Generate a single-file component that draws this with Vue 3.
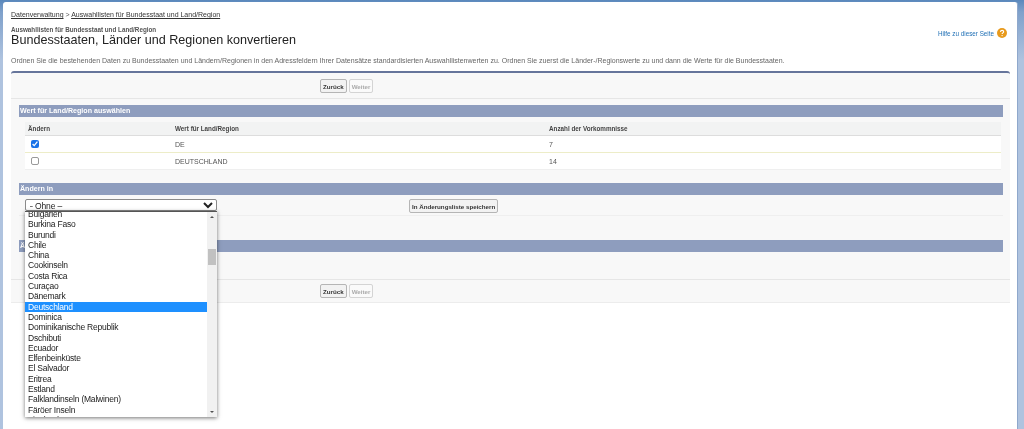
<script setup>
const topButtons = [
  { label: 'Zurück', disabled: false },
  { label: 'Weiter', disabled: true }
];

const rows = [
  { value: 'DE', count: 7, checked: true },
  { value: 'DEUTSCHLAND', count: 14, checked: false }
];

const countries = [
  'Bulgarien', 'Burkina Faso', 'Burundi', 'Chile', 'China', 'Cookinseln', 'Costa Rica',
  'Curaçao', 'Dänemark', 'Deutschland', 'Dominica', 'Dominikanische Republik', 'Dschibuti',
  'Ecuador', 'Elfenbeinküste', 'El Salvador', 'Eritrea', 'Estland', 'Falklandinseln (Malwinen)',
  'Färöer Inseln', 'Finnland'
];
</script>

<template>
  <div class="desktop">
    <main class="page">
      <nav class="crumbs">
        <a>Datenverwaltung</a> &gt; <a>Auswahllisten für Bundesstaat und Land/Region</a>
      </nav>

      <header class="head">
        <div>
          <div class="eyebrow">Auswahllisten für Bundesstaat und Land/Region</div>
          <h1>Bundesstaaten, Länder und Regionen konvertieren</h1>
        </div>
        <a class="help">
          Hilfe zu dieser Seite
          <svg width="10" height="10" viewBox="0 0 10 10">
            <circle cx="5" cy="5" r="5" fill="#e89a1c" />
            <path d="M3.4 3.9C3.5 2.9 4.2 2.4 5.1 2.4c1 0 1.6.6 1.6 1.3 0 1.2-1.6 1.2-1.6 2.4" fill="none" stroke="#fff" stroke-width="1.1" />
            <circle cx="5.1" cy="7.6" r=".7" fill="#fff" />
          </svg>
        </a>
      </header>

      <p class="intro">
        Ordnen Sie die bestehenden Daten zu Bundesstaaten und Ländern/Regionen in den Adressfeldern Ihrer Datensätze standardisierten Auswahllistenwerten zu. Ordnen Sie zuerst die Länder-/Regionswerte zu und dann die Werte für die Bundesstaaten.
      </p>

      <section class="panel">
        <div class="button-row top">
          <button v-for="b in topButtons" :key="b.label" class="btn" :class="{ off: b.disabled }">{{ b.label }}</button>
        </div>

        <div class="body">
          <h2 class="bar">Wert für Land/Region auswählen</h2>
          <table class="values">
            <thead>
              <tr>
                <th class="c1">Ändern</th>
                <th class="c2">Wert für Land/Region</th>
                <th>Anzahl der Vorkommnisse</th>
              </tr>
            </thead>
            <tbody>
              <tr v-for="row in rows" :key="row.value">
                <td class="c1"><input type="checkbox" :checked="row.checked" /></td>
                <td class="c2">{{ row.value }}</td>
                <td>{{ row.count }}</td>
              </tr>
            </tbody>
          </table>

          <h2 class="bar second">Ändern in</h2>
          <div class="change-row">
            <div class="picker">
              <select class="select">
                <option>– Ohne –</option>
              </select>
              <div class="dropdown">
                <ul class="options">
                  <li v-for="c in countries" :key="c" :class="{ active: c === 'Deutschland' }">{{ c }}</li>
                </ul>
                <div class="scrollbar">
                  <span class="arrow up"></span>
                  <span class="thumb"></span>
                  <span class="arrow down"></span>
                </div>
              </div>
            </div>
            <button class="btn">In Änderungsliste speichern</button>
          </div>

          <h2 class="bar third">Änderungsliste</h2>
        </div>

        <div class="button-row bottom">
          <button v-for="b in topButtons" :key="b.label" class="btn" :class="{ off: b.disabled }">{{ b.label }}</button>
        </div>
      </section>
    </main>
  </div>
</template>

<style>
html, body {
  margin: 0;
  overflow: hidden;
}
</style>

<style scoped>
.desktop {
  height: 429px;
  box-sizing: border-box;
  padding: 2px 6px 0 3px;
  overflow: hidden;
  background: linear-gradient(#5a88bc 0, #7fa1cb 12px, #afc3df 60px);
  font-family: "Liberation Sans", Arial, sans-serif;
  color: #333;
}

.page {
  height: 100%;
  box-sizing: border-box;
  padding: 8px 7px 0 8px;
  background: #fff;
  border-radius: 3px 3px 0 0;
  border-right: 1px solid #8fa8cc;
  filter: blur(0.35px);
}

.crumbs {
  font-size: 7px;
  line-height: 9px;
  color: #555;
}

.crumbs a {
  color: #333;
  text-decoration: underline;
}

.head {
  display: flex;
  justify-content: space-between;
  align-items: flex-start;
  margin-top: 8px;
}

.eyebrow {
  font-size: 6.3px;
  line-height: 5px;
  font-weight: bold;
  color: #555;
}

h1 {
  margin: 0;
  font-size: 12.6px;
  line-height: 16px;
  font-weight: normal;
  color: #222;
}

.help {
  display: flex;
  align-items: center;
  gap: 3px;
  margin: 1px 3px 0 0;
  font-size: 6.3px;
  color: #1f6fb5;
}

.intro {
  margin: 8px 0 0;
  font-size: 7.01px;
  line-height: 9px;
  color: #666;
  white-space: nowrap;
}

.panel {
  margin-top: 6px;
  height: 232px;
  display: flex;
  flex-direction: column;
  box-sizing: border-box;
  background: #f8f8f8;
  border-top: 2px solid #66759b;
  border-radius: 3px 3px 0 0;
  border-bottom: 1px solid #ececec;
}

.button-row {
  display: flex;
  gap: 2px;
  padding-left: 309px;
}

.button-row.top {
  height: 26px;
  padding-top: 6px;
  box-sizing: border-box;
  border-bottom: 1px solid #e6e6e6;
}

.button-row.bottom {
  margin-top: auto;
  height: 23px;
  padding-top: 4px;
  box-sizing: border-box;
  border-top: 1px solid #e6e6e6;
}

.btn {
  height: 14px;
  padding: 0 2px;
  border: 1px solid #b5b5b5;
  border-radius: 2px;
  background: #f2f2f2;
  font-family: inherit;
  font-size: 6.2px;
  font-weight: bold;
  color: #333;
}

.btn.off {
  border-color: #d4d4d4;
  background: #fafafa;
  color: #aaa;
}

.body {
  padding: 6px 7px 0 8px;
}

.bar {
  margin: 0;
  height: 12px;
  padding-left: 1px;
  background: #8e9dbe;
  font-size: 7.1px;
  line-height: 12px;
  font-weight: bold;
  color: #fff;
}

.bar.second {
  margin-top: 13px;
}

.bar.third {
  margin-top: 24px;
}

.values {
  margin: 5px 2px 0 6px;
  width: 976px;
  border-collapse: collapse;
  background: #fff;
  font-size: 7px;
  color: #555;
}

.values th {
  height: 13px;
  padding: 0 0 0 3px;
  background: #f2f3f3;
  border-bottom: 1px solid #ddd;
  text-align: left;
  font-size: 6.3px;
  font-weight: bold;
  color: #444;
}

.values td {
  height: 16px;
  padding: 0 0 0 3px;
  border-bottom: 1px solid #ededc8;
}

.values tr:last-child td {
  border-bottom: 1px solid #efefef;
}

.values .c1 {
  width: 144px;
}

.values .c2 {
  width: 371px;
}

.values input {
  display: block;
  box-sizing: border-box;
  width: 8px;
  height: 8px;
  margin: 0 0 0 3px;
  accent-color: #1a73e8;
}

.values input:not(:checked) {
  appearance: none;
  border: 1px solid #999;
  border-radius: 2px;
  background: #fff;
}

.change-row {
  display: flex;
  height: 21px;
  padding: 4px 0 0 6px;
  box-sizing: border-box;
  border-bottom: 1px solid #efefef;
}

.picker {
  position: relative;
  width: 384px;
}

.select {
  display: block;
  width: 192px;
  height: 12px;
  padding: 0;
  border: 1px solid #8a8a8a;
  border-radius: 2px;
  background-color: #fff;
  font-family: inherit;
  font-size: 8.5px;
  letter-spacing: -0.1px;
  text-indent: -2px;
  color: #222;
}

.dropdown {
  position: absolute;
  z-index: 2;
  left: 0;
  top: 12px;
  width: 192px;
  height: 205px;
  display: flex;
  overflow: hidden;
  background: #fff;
  border-top: 1px solid #555;
  box-shadow: 0 1px 4px rgba(0, 0, 0, 0.55);
}

.options {
  flex: 1;
  margin: -3px 0 0;
  padding: 0;
  list-style: none;
  font-size: 8.5px;
  letter-spacing: -0.22px;
  line-height: 10.3px;
  color: #222;
}

.options li {
  padding-left: 3px;
  white-space: nowrap;
}

.options .active {
  background: #1e90ff;
  color: #fff;
}

.scrollbar {
  position: relative;
  width: 10px;
  background: #f1f1f1;
}

.thumb {
  position: absolute;
  left: 1px;
  right: 1px;
  top: 37px;
  height: 16px;
  background: #c1c1c1;
}

.arrow {
  position: absolute;
  left: 3px;
  width: 0;
  height: 0;
  border-left: 2px solid transparent;
  border-right: 2px solid transparent;
}

.arrow.up {
  top: 4px;
  border-bottom: 2px solid #505050;
}

.arrow.down {
  bottom: 4px;
  border-top: 2px solid #505050;
}
</style>
